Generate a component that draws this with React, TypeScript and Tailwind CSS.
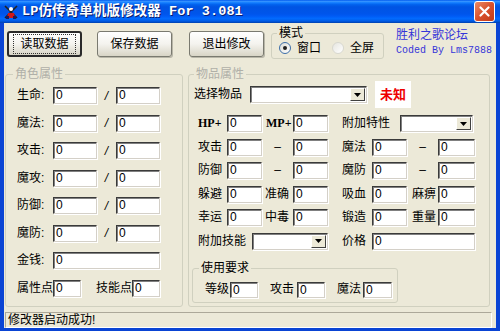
import React from 'react';

const FONT = "font-['Liberation_Sans','Noto_Sans_CJK_SC',sans-serif]";

const Field: React.FC<{ w: string; v?: string; h?: string }> = ({ w, v = '0', h = 'h-[17px]' }) => (
  <div
    className={`${w} ${h} shrink-0 bg-white border border-[#3a3a3a] border-r-[#d4d0c8] border-b-[#d4d0c8] shadow-[inset_1px_1px_0_#808080,1px_1px_0_#ffffff] pl-[2px] text-[12px] leading-[14px] text-black`}
  >
    {v}
  </div>
);

const Combo: React.FC<{ w: string }> = ({ w }) => (
  <div
    className={`${w} h-[17px] shrink-0 bg-white border border-[#3a3a3a] border-r-[#d4d0c8] border-b-[#d4d0c8] shadow-[inset_1px_1px_0_#808080,1px_1px_0_#ffffff] flex justify-end p-[1px]`}
  >
    <div className="w-[15px] h-full bg-[#ece9d8] border border-[#ffffff] border-r-[#404040] border-b-[#404040] flex items-center justify-center">
      <svg width="7" height="4" viewBox="0 0 7 4">
        <path d="M0 0h7L3.5 4z" fill="#000" />
      </svg>
    </div>
  </div>
);

const Btn: React.FC<{ label: string; focus?: boolean; ml: string }> = ({ label, focus, ml }) => (
  <div
    className={`${ml} mt-[8px] w-[75px] h-[26px] rounded-[3px] bg-gradient-to-b from-[#ffffff] via-[#f4f3ee] to-[#d8d5c6] flex items-center justify-center text-[12px] ${
      focus ? 'border-2 border-[#2a2a2a]' : 'border border-[#7a7a70] shadow-[1px_1px_0_#b8b6a8]'
    }`}
  >
    <div
      className={`px-[6px] py-[2px] ${focus ? 'border border-dotted border-[#333]' : 'border border-transparent'} leading-[14px]`}
    >
      {label}
    </div>
  </div>
);

const Radio: React.FC<{ on?: boolean; label: string }> = ({ on, label }) => (
  <div className="flex items-center gap-[6px]">
    <div
      className={`w-[12px] h-[12px] rounded-full flex items-center justify-center ${
        on ? 'border border-[#3d6ea8] bg-gradient-to-br from-[#dcdcd6] to-[#ffffff]' : 'border border-[#d8d8d0] bg-gradient-to-br from-[#e6e6e0] to-[#ffffff]'
      }`}
    >
      {on && <div className="w-[4px] h-[4px] rounded-full bg-[#222]" />}
    </div>
    <span className="text-[12px] leading-[14px]">{label}</span>
  </div>
);

const Dash = () => <div className="w-[31px] text-center text-[12px] leading-[17px]">–</div>;

const Lbl: React.FC<{ w: string; t: string; cls?: string }> = ({ w, t, cls = '' }) => (
  <div className={`${w} shrink-0 whitespace-nowrap text-[12px] leading-[17px] ${cls}`}>{t}</div>
);

export default function App() {
  const leftRows = ['生命:', '魔法:', '攻击:', '魔攻:', '防御:', '魔防:'];

  return (
    <div className={`w-[500px] h-[331px] flex flex-col bg-[#0a44d4] overflow-hidden ${FONT} text-black`}>
      {/* title bar */}
      <div className="h-[23px] shrink-0 flex items-center bg-[linear-gradient(to_bottom,#0058ee_0%,#3593ff_6%,#127dff_12%,#0262ee_20%,#0054e3_30%,#0055eb_60%,#005bf5_70%,#026afe_80%,#0062ef_88%,#0052d6_94%,#0040ab_100%)]">
        <svg width="16" height="16" viewBox="0 0 16 16" className="ml-[3px]">
          <path d="M2 2l12 12M14 2L2 14" stroke="#222" strokeWidth="1.6" />
          <circle cx="8" cy="5" r="2" fill="#fff" />
          <path d="M5 9h6l1 5H4z" fill="#d01818" />
          <path d="M3 12h3v3H3zM10 12h3v3h-3z" fill="#1a1a60" />
        </svg>
        <span className="ml-[3px] text-white font-bold text-[13.5px] leading-[16px] tracking-[0.1px] font-['Liberation_Mono','Noto_Sans_CJK_SC',monospace] [text-shadow:1px_1px_0_#0a1f70]">
          LP仿传奇单机版修改器 For 3.081
        </span>
        <div className="ml-auto mr-[5px] w-[21px] h-[21px] rounded-[3px] border border-white bg-gradient-to-br from-[#ea8a66] via-[#d8502c] to-[#c23a18] flex items-center justify-center">
          <svg width="11" height="11" viewBox="0 0 11 11">
            <path d="M1.5 1.5l8 8M9.5 1.5l-8 8" stroke="#fff" strokeWidth="2.2" strokeLinecap="round" />
          </svg>
        </div>
      </div>

      {/* body */}
      <div className="flex-1 mx-[4px] mb-[3px] bg-[#ece9d8] flex flex-col">
        {/* top row */}
        <div className="h-[44px] flex items-start shrink-0">
          <Btn label="读取数据" focus ml="ml-[3px]" />
          <Btn label="保存数据" ml="ml-[15px]" />
          <Btn label="退出修改" ml="ml-[17px]" />
          <fieldset className="ml-[7px] mt-[4px] w-[113px] h-[32px] border border-[#d0d0bf] rounded-[3px] min-w-0 pl-[7px]">
            <legend className="ml-[-2px] px-[2px] text-[12px] leading-[12px]">模式</legend>
            <div className="flex items-center gap-[11px] mt-[2px]">
              <Radio on label="窗口" />
              <Radio label="全屏" />
            </div>
          </fieldset>
          <div className="ml-[12px] mt-[5px] flex flex-col text-[#3535d8]">
            <span className="text-[12px] leading-[14px]">胜利之歌论坛</span>
            <span className="mt-[3px] text-[10px] leading-[12px] font-['Liberation_Mono',monospace]">Coded By Lms7888</span>
          </div>
        </div>

        {/* groups */}
        <div className="flex ml-[1px] gap-[5px] shrink-0">
          <fieldset className="w-[178px] h-[240px] border border-[#d0d0bf] rounded-[3px] min-w-0 pl-[11px] pt-[6px]">
            <legend className="ml-[-4px] px-[2px] text-[12px] leading-[14px] text-[#b0b0a8]">角色属性</legend>
            <div className="flex flex-col gap-[10.5px]">
              {leftRows.map((t) => (
                <div key={t} className="flex items-center h-[17px]">
                  <Lbl w="w-[36px]" t={t} />
                  <Field w="w-[44px]" />
                  <div className="w-[19px] text-center text-[12px] italic">/</div>
                  <Field w="w-[44px]" />
                </div>
              ))}
              <div className="flex items-center h-[17px]">
                <Lbl w="w-[36px]" t="金钱:" />
                <Field w="w-[107px]" />
              </div>
              <div className="flex items-center h-[17px]">
                <Lbl w="w-[36px]" t="属性点" />
                <Field w="w-[28px]" />
                <Lbl w="w-[36px]" t="技能点" cls="ml-[15px]" />
                <Field w="w-[28px]" />
              </div>
            </div>
          </fieldset>

          <fieldset className="w-[302px] h-[240px] border border-[#d0d0bf] rounded-[3px] min-w-0 pl-[5px]">
            <legend className="ml-[0px] px-[2px] text-[12px] leading-[14px] text-[#b0b0a8]">物品属性</legend>
            <div className="flex items-center h-[27px]">
              <Lbl w="w-[56px]" t="选择物品" />
              <Combo w="w-[117px]" />
              <div className="ml-[8px] w-[36px] h-[27px] bg-white flex items-center justify-center text-[13px] font-bold text-[#ee0000]">
                未知
              </div>
            </div>

            <div className="mt-[7px] pl-[4px] flex flex-col gap-[6.6px]">
              <div className="flex items-center h-[17px]">
                <Lbl w="w-[29px]" t="HP+" cls="text-[9px] font-bold font-['Liberation_Serif',serif]" />
                <Field w="w-[35px]" />
                <Lbl w="w-[31px]" t="MP+" cls="pl-[4px] text-[9px] font-bold font-['Liberation_Serif',serif]" />
                <Field w="w-[35px]" />
                <Lbl w="w-[58px]" t="附加特性" cls="ml-[14px]" />
                <Combo w="w-[73px]" />
              </div>
              {[
                ['攻击', null, '魔法', null],
                ['防御', null, '魔防', null],
                ['躲避', '准确', '吸血', '麻痹'],
                ['幸运', '中毒', '锻造', '重量'],
              ].map(([a, b, c, d]) => (
                <div key={a as string} className="grid grid-cols-[29px_35px_31px_35px_14px_30px_35px_31px_37px] items-center h-[17px]">
                  <Lbl w="w-full" t={a as string} />
                  <Field w="w-full" />
                  {b ? <Lbl w="w-full" t={b} cls="pl-[3px]" /> : <Dash />}
                  <Field w="w-full" />
                  <div />
                  <Lbl w="w-full" t={c as string} />
                  <Field w="w-full" />
                  {d ? <Lbl w="w-full" t={d} cls="pl-[5px]" /> : <Dash />}
                  <Field w="w-full" />
                </div>
              ))}
              <div className="flex items-center h-[17px]">
                <Lbl w="w-[54px]" t="附加技能" />
                <Combo w="w-[76px]" />
                <Lbl w="w-[30px]" t="价格" cls="ml-[14px]" />
                <Field w="w-[103px]" />
              </div>
            </div>

            <fieldset className="mt-[12px] ml-[-2px] w-[206px] h-[41px] border border-[#d0d0bf] rounded-[3px] min-w-0 pl-[12px] pt-[7px]">
              <legend className="ml-[-6px] px-[2px] text-[12px] leading-[13px]">使用要求</legend>
              <div className="flex items-center h-[16px]">
                <Lbl w="w-[25px]" t="等级" />
                <Field w="w-[28px]" h="h-[16px]" />
                <Lbl w="w-[27px]" t="攻击" cls="ml-[12px]" />
                <Field w="w-[28px]" h="h-[16px]" />
                <Lbl w="w-[26px]" t="魔法" cls="ml-[12px]" />
                <Field w="w-[29px]" h="h-[16px]" />
              </div>
            </fieldset>
          </fieldset>
        </div>

        {/* status bar */}
        <div className="mt-[5px] ml-[1px] w-[487px] h-[16px] border border-[#aca899] border-r-white border-b-white pl-[2px] text-[12px] leading-[14px]">
          修改器启动成功!
        </div>
      </div>
    </div>
  );
}
